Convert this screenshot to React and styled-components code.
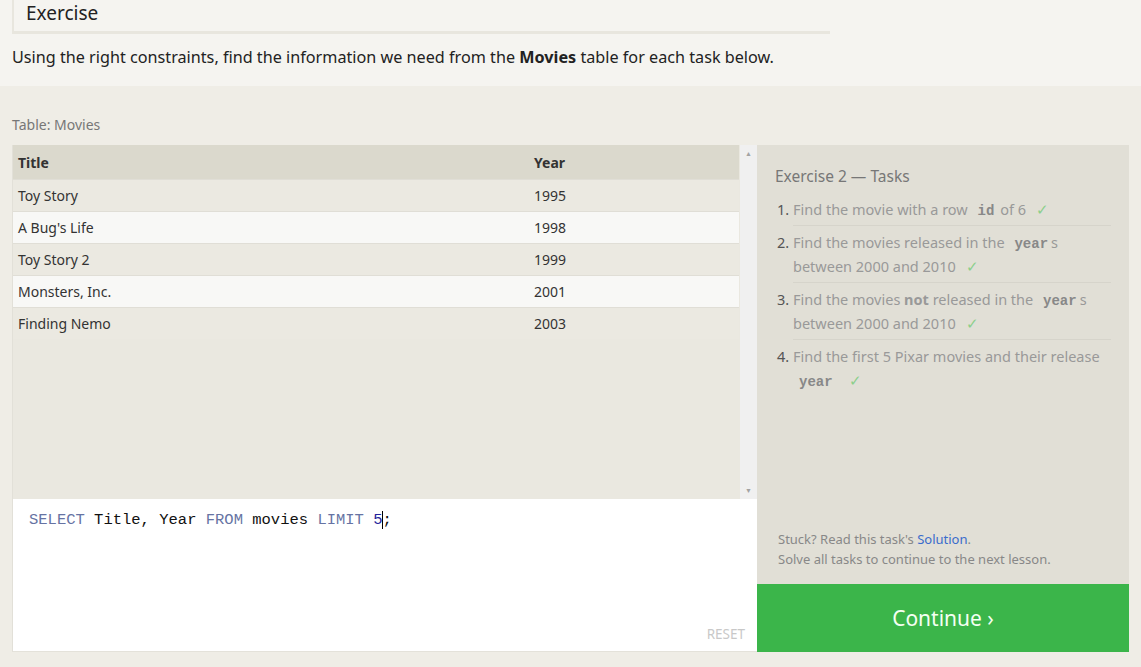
import styled, { createGlobalStyle } from 'styled-components';

const GlobalStyle = createGlobalStyle`
  html, body {
    margin: 0;
    padding: 0;
    background: #efede6;
    font-family: "Noto Sans", "Open Sans", sans-serif;
  }
`;

const TopSection = styled.section`
  background: #f5f4f0;
  height: 86px;
  padding: 0 12px;
  box-sizing: border-box;
`;

const ExerciseHeader = styled.div`
  width: 818px;
  height: 34px;
  box-sizing: border-box;
  border-left: 2px solid #e8e6de;
  border-bottom: 3px solid #e8e6de;
  padding-left: 12px;
  font-size: 19px;
  line-height: 26px;
  color: #222;
`;

const Intro = styled.p`
  margin: 12px 0 0;
  font-size: 16.2px;
  color: #222;

  b { font-weight: 700; }
`;

const Main = styled.main`
  padding: 29px 12px 15px;
`;

const TableLabel = styled.div`
  font-size: 14px;
  color: #777;
  height: 30px;
`;

const Workspace = styled.div`
  display: flex;
  width: 1117px;
  height: 507px;
`;

const LeftCol = styled.div`
  width: 745px;
  display: flex;
  flex-direction: column;
`;

const Results = styled.div`
  display: flex;
  height: 354px;
  background: #eae8e0;
  border-left: 1px solid #e2e0d8;
`;

const Table = styled.table`
  width: 726px;
  border-collapse: collapse;
  align-self: flex-start;
  font-size: 14px;
  color: #333;
`;

const Th = styled.th`
  text-align: left;
  font-weight: 700;
  height: 34px;
  padding: 0 5px;
  background: #dbd9cd;
  color: #333;
  width: ${p => p.$w || 'auto'};
`;

const Row = styled.tr`
  background: ${p => (p.$alt ? '#f8f8f6' : '#ebe9e1')};
  border-top: 1px solid #e0ded6;
`;

const Td = styled.td`
  height: 31px;
  padding: 0 5px;
`;

const Scrollbar = styled.div`
  width: 17px;
  background: #f0f0f0;
  display: flex;
  flex-direction: column;
  justify-content: space-between;
  align-items: center;
  padding: 4px 0;
  box-sizing: border-box;
  font-size: 7px;
  color: #a3a3a3;
  margin-left: 1px;
`;

const Editor = styled.div`
  flex: 1;
  background: #fff;
  border-left: 1px solid #e2e0d8;
  border-bottom: 1px solid #e4e2da;
  position: relative;
  padding: 12px 16px;
  font-family: "Liberation Mono", "DejaVu Sans Mono", monospace;
  font-size: 15.5px;
  color: #111;
`;

const Kw = styled.span`
  color: ${p => (p.$num ? '#22229a' : '#6673a3')};
`;

const Caret = styled.span`
  border-left: 1px solid #000;
  margin-left: -1px;
`;

const Reset = styled.div`
  position: absolute;
  right: 12px;
  bottom: 8px;
  font-family: "Noto Sans", sans-serif;
  font-size: 13.5px;
  color: #c8c8c8;
`;

const RightCol = styled.div`
  width: 372px;
  display: flex;
  flex-direction: column;
`;

const TasksPanel = styled.div`
  flex: 1;
  background: #e1dfd6;
  padding: 20px 18px 0 18px;
  display: flex;
  flex-direction: column;
`;

const TasksTitle = styled.div`
  font-size: 15.5px;
  color: #777;
  margin-bottom: 10px;
`;

const TaskList = styled.ol`
  margin: 0;
  padding: 0 0 0 18px;
  font-size: 14.5px;
  color: #999;
  line-height: 24px;
`;

const TaskItem = styled.li`
  padding: 0 0 4px;
  margin-bottom: 4px;
  border-bottom: ${p => (p.$last ? 'none' : '1px solid #d6d4cb')};

  &::marker {
    color: #555;
  }
`;

const Code = styled.code`
  font-family: "Liberation Mono", monospace;
  font-size: 14px;
  line-height: 1;
  font-weight: 700;
  color: #888;
  margin: 0 ${p => (p.$tight ? '3px' : '6px')} 0 6px;
`;

const Check = styled.span`
  color: #8ccf8c;
  line-height: 1;
  margin-left: 10px;
`;

const Hints = styled.div`
  margin-top: auto;
  padding: 0 3px 15px;
  font-size: 13px;
  line-height: 20px;
  color: #888;

  a { color: #3a6ccc; text-decoration: none; }
`;

const ContinueButton = styled.button`
  height: 68px;
  border: none;
  background: #3bb54a;
  color: #f4fff2;
  font-family: "Noto Sans", sans-serif;
  font-size: 21px;
  cursor: pointer;
`;

const movies = [
  ['Toy Story', 1995],
  ["A Bug's Life", 1998],
  ['Toy Story 2', 1999],
  ['Monsters, Inc.', 2001],
  ['Finding Nemo', 2003],
];

export default function App() {
  return (
    <>
      <GlobalStyle />
      <TopSection>
        <ExerciseHeader>Exercise</ExerciseHeader>
        <Intro>
          Using the right constraints, find the information we need from the <b>Movies</b> table for each task below.
        </Intro>
      </TopSection>
      <Main>
        <TableLabel>Table: Movies</TableLabel>
        <Workspace>
          <LeftCol>
            <Results>
              <Table>
                <thead>
                  <tr>
                    <Th $w="506px">Title</Th>
                    <Th>Year</Th>
                  </tr>
                </thead>
                <tbody>
                  {movies.map(([t, y], i) => (
                    <Row key={t} $alt={i % 2 === 1}>
                      <Td>{t}</Td>
                      <Td>{y}</Td>
                    </Row>
                  ))}
                </tbody>
              </Table>
              <Scrollbar>
                <span>▲</span>
                <span>▼</span>
              </Scrollbar>
            </Results>
            <Editor>
              <Kw>SELECT</Kw> Title, Year <Kw>FROM</Kw> movies <Kw>LIMIT</Kw> <Kw $num>5</Kw><Caret />;
              <Reset>RESET</Reset>
            </Editor>
          </LeftCol>
          <RightCol>
            <TasksPanel>
              <TasksTitle>Exercise 2 — Tasks</TasksTitle>
              <TaskList>
                <TaskItem>
                  Find the movie with a row <Code>id</Code>of 6<Check>✓</Check>
                </TaskItem>
                <TaskItem>
                  Find the movies released in the <Code $tight>year</Code>s between 2000 and 2010<Check>✓</Check>
                </TaskItem>
                <TaskItem>
                  Find the movies <b>not</b> released in the <Code $tight>year</Code>s between 2000 and 2010<Check>✓</Check>
                </TaskItem>
                <TaskItem $last>
                  Find the first 5 Pixar movies and their release <Code>year</Code><Check>✓</Check>
                </TaskItem>
              </TaskList>
              <Hints>
                Stuck? Read this task's <a href="#">Solution</a>.
                <br />
                Solve all tasks to continue to the next lesson.
              </Hints>
            </TasksPanel>
            <ContinueButton>Continue ›</ContinueButton>
          </RightCol>
        </Workspace>
      </Main>
    </>
  );
}
